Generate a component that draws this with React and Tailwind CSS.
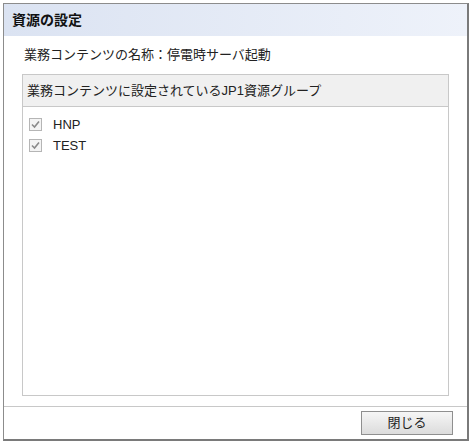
import React from 'react';

const Check = ({ label }) => (
  <label className="flex items-center h-[21px]">
    <span className="w-[13px] h-[13px] border border-[#b5b5b5] bg-[#f4f4f4] flex items-center justify-center">
      <svg width="9" height="9" viewBox="0 0 9 9">
        <path d="M1 4.5 L3.5 7 L8 1.5" fill="none" stroke="#8a8a8a" strokeWidth="1.6" />
      </svg>
    </span>
    <span className="ml-[11px] text-[13px] text-[#222]">{label}</span>
  </label>
);

export default function App() {
  return (
    <div
      className="w-[472px] h-[445px] bg-white pt-[3px] pl-[3px]"
      style={{ fontFamily: '"Liberation Sans", "Noto Sans CJK JP", sans-serif' }}
    >
      <div className="w-[466px] h-[438px] border border-[#8c8c8c] border-r-2 border-b-2 border-r-[#7a7a7a] border-b-[#7a7a7a] flex flex-col bg-white">
        {/* Title bar */}
        <div className="h-[32px] shrink-0 flex items-center px-[8px] bg-gradient-to-r from-[#dbe3f2] to-[#eef2fa]">
          <span className="text-[14px] font-bold text-[#111]">資源の設定</span>
        </div>

        {/* Content */}
        <div className="flex-1 flex flex-col px-[18px] pt-[9px] pb-[10px]">
          <div className="text-[13px] text-[#222] pl-[2px] h-[20px] flex items-center">
            業務コンテンツの名称：停電時サーバ起動
          </div>
          <div className="mt-[9px] flex-1 border border-[#c8c8c8] flex flex-col">
            <div className="h-[32px] bg-[#f0f0f0] border-b border-[#c8c8c8] flex items-center px-[4px] text-[13px] text-[#222]">
              業務コンテンツに設定されているJP1資源グループ
            </div>
            <div className="px-[6px] pt-[7px]">
              <Check label="HNP" />
              <Check label="TEST" />
            </div>
          </div>
        </div>

        {/* Footer */}
        <div className="h-[33px] shrink-0 border-t border-[#c8c8c8] flex items-center justify-end pr-[14px]">
          <button className="w-[92px] h-[24px] border border-[#8f8f8f] bg-gradient-to-b from-[#f6f6f6] to-[#dcdcdc] text-[13px] text-[#222]">
            閉じる
          </button>
        </div>
      </div>
    </div>
  );
}
